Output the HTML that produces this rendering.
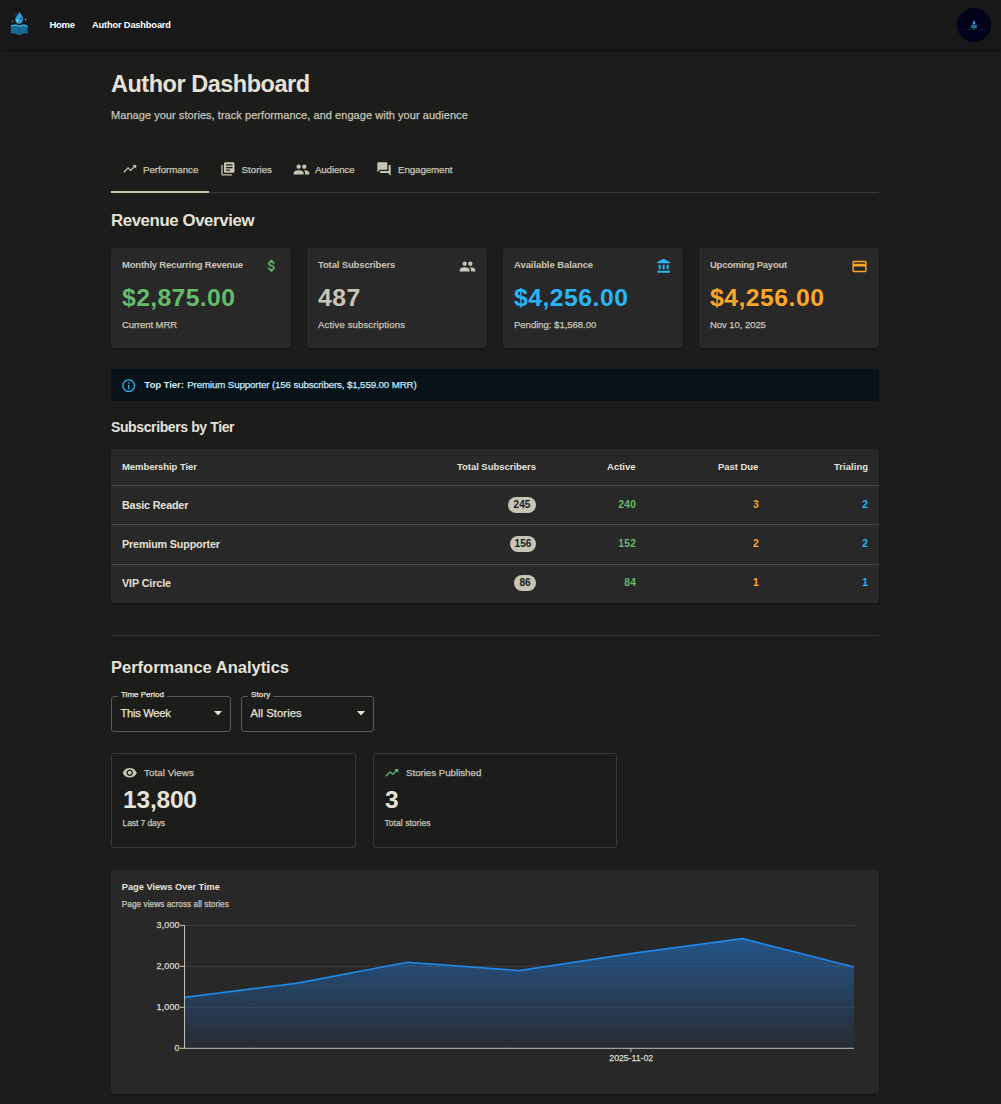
<!DOCTYPE html>
<html><head><meta charset="utf-8"><title>Author Dashboard</title>
<style>
html,body{margin:0;padding:0;}
body{width:1001px;height:1104px;overflow:hidden;position:relative;background:#1c1c1b;font-family:"Liberation Sans",sans-serif;}
.t{position:absolute;line-height:1;white-space:nowrap;}
b{font-weight:700;}
</style></head><body>
<div style="position:absolute;left:0px;top:0px;width:1001px;height:50px;background:#181818;box-shadow:0 1px 2px rgba(0,0,0,0.5);"></div>
<svg style="position:absolute;left:0;top:0" width="40" height="40" viewBox="0 0 40 40">
<path d="M10.8 25.6 Q15 23.6 19.2 25.6 Q23.4 23.6 27.6 25.6 L27.6 33.4 Q23.4 32.6 19.2 35.2 Q15 32.6 10.8 33.4 Z" fill="#1b6b92"/>
<path d="M19.2 25.6 L19.2 35.2" stroke="#155a7c" stroke-width="0.6"/>
<path d="M10.8 25.6 Q15 23.6 19.2 25.6 Q23.4 23.6 27.6 25.6 L27.6 26.8 Q23.4 25 19.2 27 Q15 25 10.8 26.8 Z" fill="#3aa7d9"/>
<path d="M19.4 12 C21.8 14.6 23 16.8 23 19.6 C23 22.2 21.3 23.8 19.2 23.8 C17 23.8 15.3 22.2 15.3 19.8 C15.3 17.2 17.6 15.6 19.4 12 Z" fill="#2f9fd4"/>
<path d="M20.6 17.2 C21.6 18.4 21.8 19.6 21 20.6 C20.8 19.4 20.2 18.6 19.6 18.2 Z" fill="#0f3a52"/>
<path d="M17.3 19.2 l0.35 0.9 0.9 0.35 -0.9 0.35 -0.35 0.9 -0.35 -0.9 -0.9 -0.35 0.9 -0.35z" fill="#d8f3ff"/>
<path d="M25.6 18.2 l0.4 1 1 0.4 -1 0.4 -0.4 1 -0.4 -1 -1 -0.4 1 -0.4z" fill="#4fc3f7"/>
<path d="M12.4 20.2 l0.3 0.8 0.8 0.3 -0.8 0.3 -0.3 0.8 -0.3 -0.8 -0.8 -0.3 0.8 -0.3z" fill="#4fc3f7"/>
<path d="M16 13.2 l0.3 0.7 0.7 0.3 -0.7 0.3 -0.3 0.7 -0.3 -0.7 -0.7 -0.3 0.7 -0.3z" fill="#3a9fcf"/>
</svg>
<div class="t" style="top:20.00px;font-size:9.5px;font-weight:700;color:#ffffff;letter-spacing:-0.297px;left:49.50px;">Home</div>
<div class="t" style="top:21.00px;font-size:9.25px;font-weight:700;color:#ffffff;letter-spacing:-0.148px;left:92.00px;">Author Dashboard</div>
<div style="position:absolute;left:957px;top:8px;width:34px;height:34px;border-radius:50%;background:#02021a;"></div>
<svg style="position:absolute;left:970px;top:20px" width="8" height="9" viewBox="0 0 19 26"><path d="M1 14.5 L9.5 12 L18 14.5 L18 23 L9.5 25 L1 23 Z" fill="#1c6a93"/><path d="M9.5 1.5 C11.5 4 13 6 13 8.5 C13 10.8 11.4 12.3 9.4 12.3 C7.3 12.3 5.8 10.8 5.8 8.7 C5.8 6.5 8 4.5 9.5 1.5 Z" fill="#3aa9dc"/></svg>
<div style="position:absolute;left:963px;top:29px;width:23px;height:1.2px;background:repeating-linear-gradient(90deg,#163d66 0 1.5px,transparent 1.5px 2.6px);opacity:0.8;"></div>
<div class="t" style="top:73.00px;font-size:23.5px;font-weight:700;color:#e6e2d8;letter-spacing:-0.485px;left:111.00px;">Author Dashboard</div>
<div class="t" style="top:110.00px;font-size:11.0px;font-weight:400;color:#c9c5b9;letter-spacing:0.049px;left:111.00px;-webkit-text-stroke:0.25px #c9c5b9;">Manage your stories, track performance, and engage with your audience</div>
<svg style="position:absolute;left:121.55px;top:161.30px" width="15.5" height="15.5" viewBox="0 0 24 24"><path fill="#c9c5b3"  d="M16 6l2.29 2.29-4.88 4.88-4-4L2 16.59 3.41 18l6-6 4 4 6.3-6.29L22 12V6z"/></svg>
<div class="t" style="top:165.00px;font-size:9.75px;font-weight:400;color:#c9c5b3;letter-spacing:-0.051px;left:143.00px;-webkit-text-stroke:0.25px #c9c5b3;">Performance</div>
<svg style="position:absolute;left:220.00px;top:161.00px" width="15.8" height="15.8" viewBox="0 0 24 24"><path fill="#c9c5b3"  d="M4 6H2v14c0 1.1.9 2 2 2h14v-2H4V6zm16-4H8c-1.1 0-2 .9-2 2v12c0 1.1.9 2 2 2h12c1.1 0 2-.9 2-2V4c0-1.1-.9-2-2-2zm-1 9H9V9h10v2zm-4 4H9v-2h6v2zm4-8H9V5h10v2z"/></svg>
<div class="t" style="top:165.00px;font-size:9.75px;font-weight:400;color:#c9c5b3;letter-spacing:0.043px;left:241.40px;-webkit-text-stroke:0.25px #c9c5b3;">Stories</div>
<svg style="position:absolute;left:292.60px;top:160.50px" width="17" height="17" viewBox="0 0 24 24"><path fill="#c9c5b3"  d="M16 11c1.66 0 2.99-1.34 2.99-3S17.66 5 16 5c-1.66 0-3 1.34-3 3s1.34 3 3 3zm-8 0c1.66 0 2.99-1.34 2.99-3S9.66 5 8 5C6.34 5 5 6.34 5 8s1.34 3 3 3zm0 2c-2.33 0-7 1.17-7 3.5V19h14v-2.5c0-2.33-4.67-3.5-7-3.5zm8 0c-.29 0-.62.02-.97.05 1.16.84 1.97 1.97 1.97 3.45V19h6v-2.5c0-2.33-4.67-3.5-7-3.5z"/></svg>
<div class="t" style="top:165.00px;font-size:9.75px;font-weight:400;color:#c9c5b3;letter-spacing:-0.151px;left:315.00px;-webkit-text-stroke:0.25px #c9c5b3;">Audience</div>
<svg style="position:absolute;left:375.90px;top:160.90px" width="16" height="16" viewBox="0 0 24 24"><path fill="#c9c5b3"  d="M21 6h-2v9H6v2c0 .55.45 1 1 1h11l4 4V7c0-.55-.45-1-1-1zm-4 6V3c0-.55-.45-1-1-1H3c-.55 0-1 .45-1 1v14l4-4h10c.55 0 1-.45 1-1z"/></svg>
<div class="t" style="top:165.00px;font-size:9.75px;font-weight:400;color:#c9c5b3;letter-spacing:-0.098px;left:398.00px;-webkit-text-stroke:0.25px #c9c5b3;">Engagement</div>
<div style="position:absolute;left:111px;top:192px;width:768px;height:1px;background:#3a3a3a;"></div>
<div style="position:absolute;left:111px;top:191px;width:98px;height:2px;background:#c9c5b3;"></div>
<div class="t" style="top:213.00px;font-size:16.75px;font-weight:700;color:#e6e2d8;letter-spacing:-0.370px;left:111.00px;">Revenue Overview</div>
<div style="position:absolute;left:111px;top:248px;width:180px;height:100px;background:#282828;border-radius:3px;box-shadow:0 1px 2px rgba(0,0,0,0.35);"></div>
<div class="t" style="top:260.00px;font-size:9.5px;font-weight:700;color:#c9c5b9;letter-spacing:-0.212px;left:122.00px;">Monthly Recurring Revenue</div>
<div class="t" style="top:286.00px;font-size:24.75px;font-weight:700;color:#66bb6a;letter-spacing:0.361px;left:122.00px;">$2,875.00</div>
<div class="t" style="top:320.00px;font-size:9.5px;font-weight:400;color:#c9c5b9;letter-spacing:-0.092px;left:122.00px;-webkit-text-stroke:0.25px #c9c5b9;">Current MRR</div>
<svg style="position:absolute;left:263.78px;top:258.15px" width="15.5" height="15.5" viewBox="0 0 24 24"><path fill="#66bb6a" stroke="#66bb6a" stroke-width="0.5" d="M11.8 10.9c-2.27-.59-3-1.2-3-2.15 0-1.09 1.01-1.85 2.7-1.85 1.78 0 2.44.85 2.5 2.1h2.21c-.07-1.72-1.12-3.3-3.21-3.81V3h-3v2.16c-1.94.42-3.5 1.68-3.5 3.61 0 2.31 1.91 3.46 4.7 4.13 2.5.6 3 1.48 3 2.41 0 .69-.49 1.79-2.7 1.79-2.06 0-2.87-.92-2.98-2.1h-2.2c.12 2.19 1.76 3.42 3.68 3.83V21h3v-2.15c1.95-.37 3.5-1.5 3.5-3.55 0-2.84-2.43-3.81-4.7-4.4z"/></svg>
<div style="position:absolute;left:307px;top:248px;width:180px;height:100px;background:#282828;border-radius:3px;box-shadow:0 1px 2px rgba(0,0,0,0.35);"></div>
<div class="t" style="top:260.00px;font-size:9.5px;font-weight:700;color:#c9c5b9;letter-spacing:-0.145px;left:318.00px;">Total Subscribers</div>
<div class="t" style="top:286.00px;font-size:24.75px;font-weight:700;color:#c9c5b9;letter-spacing:0.502px;left:318.00px;">487</div>
<div class="t" style="top:320.00px;font-size:9.5px;font-weight:400;color:#c9c5b9;letter-spacing:0.161px;left:318.00px;-webkit-text-stroke:0.25px #c9c5b9;">Active subscriptions</div>
<svg style="position:absolute;left:459.00px;top:257.50px" width="17" height="17" viewBox="0 0 24 24"><path fill="#c9c5b9"  d="M16 11c1.66 0 2.99-1.34 2.99-3S17.66 5 16 5c-1.66 0-3 1.34-3 3s1.34 3 3 3zm-8 0c1.66 0 2.99-1.34 2.99-3S9.66 5 8 5C6.34 5 5 6.34 5 8s1.34 3 3 3zm0 2c-2.33 0-7 1.17-7 3.5V19h14v-2.5c0-2.33-4.67-3.5-7-3.5zm8 0c-.29 0-.62.02-.97.05 1.16.84 1.97 1.97 1.97 3.45V19h6v-2.5c0-2.33-4.67-3.5-7-3.5z"/></svg>
<div style="position:absolute;left:503px;top:248px;width:180px;height:100px;background:#282828;border-radius:3px;box-shadow:0 1px 2px rgba(0,0,0,0.35);"></div>
<div class="t" style="top:260.00px;font-size:9.5px;font-weight:700;color:#c9c5b9;letter-spacing:-0.082px;left:514.00px;">Available Balance</div>
<div class="t" style="top:286.00px;font-size:24.75px;font-weight:700;color:#29b6f6;letter-spacing:0.474px;left:514.00px;">$4,256.00</div>
<div class="t" style="top:320.00px;font-size:9.5px;font-weight:400;color:#c9c5b9;letter-spacing:-0.005px;left:514.00px;-webkit-text-stroke:0.25px #c9c5b9;">Pending: $1,568.00</div>
<svg style="position:absolute;left:656.33px;top:257.93px" width="16" height="16" viewBox="0 0 24 24"><path fill="#29b6f6"  d="M4 10v7h3v-7H4zm6 0v7h3v-7h-3zM2 22h19v-3H2v3zm14-12v7h3v-7h-3zm-4.5-9L2 6v2h19V6l-9.5-5z"/></svg>
<div style="position:absolute;left:699px;top:248px;width:180px;height:100px;background:#282828;border-radius:3px;box-shadow:0 1px 2px rgba(0,0,0,0.35);"></div>
<div class="t" style="top:260.00px;font-size:9.5px;font-weight:700;color:#c9c5b9;letter-spacing:-0.258px;left:710.00px;">Upcoming Payout</div>
<div class="t" style="top:286.00px;font-size:24.75px;font-weight:700;color:#ffa726;letter-spacing:0.474px;left:710.00px;">$4,256.00</div>
<div class="t" style="top:320.00px;font-size:9.5px;font-weight:400;color:#c9c5b9;letter-spacing:-0.055px;left:710.00px;-webkit-text-stroke:0.25px #c9c5b9;">Nov 10, 2025</div>
<svg style="position:absolute;left:851.00px;top:257.50px" width="17" height="17" viewBox="0 0 24 24"><path fill="#ffa726"  d="M20 4H4c-1.11 0-1.99.89-1.99 2L2 18c0 1.11.89 2 2 2h16c1.11 0 2-.89 2-2V6c0-1.11-.89-2-2-2zm0 14H4v-6h16v6zm0-10H4V6h16v2z"/></svg>
<div style="position:absolute;left:111px;top:369px;width:768px;height:32px;background:#071219;border-radius:3px;"></div>
<svg style="position:absolute;left:120.60px;top:377.60px" width="15.4" height="15.4" viewBox="0 0 24 24"><path fill="#29b6f6"  d="M11 7h2v2h-2zm0 4h2v6h-2zm1-9C6.48 2 2 6.48 2 12s4.48 10 10 10 10-4.48 10-10S17.52 2 12 2zm0 18c-4.41 0-8-3.59-8-8s3.59-8 8-8 8 3.59 8 8-3.59 8-8 8z"/></svg>
<div class="t" style="top:380.00px;font-size:9.75px;font-weight:700;color:#cfeafa;letter-spacing:-0.137px;left:144.30px;">Top Tier:</div>
<div class="t" style="top:380.00px;font-size:9.75px;font-weight:400;color:#c2e6f8;letter-spacing:-0.138px;left:187.20px;-webkit-text-stroke:0.25px #c2e6f8;">Premium Supporter (156 subscribers, $1,559.00 MRR)</div>
<div class="t" style="top:420.00px;font-size:14.0px;font-weight:700;color:#e6e2d8;letter-spacing:-0.385px;left:111.00px;">Subscribers by Tier</div>
<div style="position:absolute;left:111px;top:449px;width:768px;height:154px;background:#282828;border-radius:3px;box-shadow:0 1px 2px rgba(0,0,0,0.35);"></div>
<div class="t" style="top:462.00px;font-size:9.5px;font-weight:700;color:#e6e2d8;letter-spacing:-0.059px;left:122.00px;">Membership Tier</div>
<div class="t" style="top:462.00px;font-size:9.5px;font-weight:700;color:#e6e2d8;letter-spacing:-0.026px;left:456.90px;">Total Subscribers</div>
<div class="t" style="top:462.00px;font-size:9.5px;font-weight:700;color:#e6e2d8;letter-spacing:0.020px;left:607.00px;">Active</div>
<div class="t" style="top:462.00px;font-size:9.5px;font-weight:700;color:#e6e2d8;letter-spacing:-0.034px;left:717.90px;">Past Due</div>
<div class="t" style="top:462.00px;font-size:9.5px;font-weight:700;color:#e6e2d8;letter-spacing:0.033px;left:834.00px;">Trialing</div>
<div style="position:absolute;left:111px;top:485px;width:768px;height:1px;background:#474747;"></div>
<div style="position:absolute;left:111px;top:524px;width:768px;height:1px;background:#474747;"></div>
<div style="position:absolute;left:111px;top:564px;width:768px;height:1px;background:#474747;"></div>
<div class="t" style="top:500.00px;font-size:10.75px;font-weight:700;color:#e6e2d8;letter-spacing:-0.160px;left:122.00px;">Basic Reader</div>
<div style="position:absolute;left:508px;top:497px;width:28px;height:16px;background:#c6c4b4;border-radius:8px;"></div>
<div class="t" style="top:500.00px;font-size:10px;font-weight:700;color:#1a1a1a;letter-spacing:0.056px;left:513.60px;">245</div>
<div class="t" style="top:500.00px;font-size:10.25px;font-weight:700;color:#66bb6a;letter-spacing:0.295px;left:618.30px;">240</div>
<div class="t" style="top:500.00px;font-size:10.25px;font-weight:700;color:#ffa726;letter-spacing:0.197px;left:752.90px;">3</div>
<div class="t" style="top:500.00px;font-size:10.25px;font-weight:700;color:#29b6f6;letter-spacing:0.197px;left:862.30px;">2</div>
<div class="t" style="top:539.00px;font-size:10.75px;font-weight:700;color:#e6e2d8;letter-spacing:-0.147px;left:122.00px;">Premium Supporter</div>
<div style="position:absolute;left:510px;top:536px;width:26px;height:16px;background:#c6c4b4;border-radius:8px;"></div>
<div class="t" style="top:539.00px;font-size:10px;font-weight:700;color:#1a1a1a;letter-spacing:0.056px;left:514.60px;">156</div>
<div class="t" style="top:539.00px;font-size:10.25px;font-weight:700;color:#66bb6a;letter-spacing:0.295px;left:618.30px;">152</div>
<div class="t" style="top:539.00px;font-size:10.25px;font-weight:700;color:#ffa726;letter-spacing:0.197px;left:752.90px;">2</div>
<div class="t" style="top:539.00px;font-size:10.25px;font-weight:700;color:#29b6f6;letter-spacing:0.197px;left:862.30px;">2</div>
<div class="t" style="top:578.00px;font-size:10.75px;font-weight:700;color:#e6e2d8;letter-spacing:-0.113px;left:122.00px;">VIP Circle</div>
<div style="position:absolute;left:514px;top:575px;width:22px;height:16px;background:#c6c4b4;border-radius:8px;"></div>
<div class="t" style="top:578.00px;font-size:10px;font-weight:700;color:#1a1a1a;letter-spacing:0.075px;left:519.40px;">86</div>
<div class="t" style="top:578.00px;font-size:10.25px;font-weight:700;color:#66bb6a;letter-spacing:0.394px;left:624.20px;">84</div>
<div class="t" style="top:578.00px;font-size:10.25px;font-weight:700;color:#ffa726;letter-spacing:0.197px;left:752.90px;">1</div>
<div class="t" style="top:578.00px;font-size:10.25px;font-weight:700;color:#29b6f6;letter-spacing:0.197px;left:862.30px;">1</div>
<div style="position:absolute;left:111px;top:635px;width:768px;height:1px;background:#363636;"></div>
<div class="t" style="top:659.00px;font-size:16.5px;font-weight:700;color:#e6e2d8;letter-spacing:-0.009px;left:111.00px;">Performance Analytics</div>
<div style="position:absolute;left:111px;top:695.5px;width:120px;height:36px;border:1px solid #5a5a5a;border-radius:3px;box-sizing:border-box;"></div>
<div style="position:absolute;left:118px;top:694px;width:49px;height:3px;background:#1c1c1b;"></div>
<div class="t" style="top:691.00px;font-size:8px;font-weight:400;color:#e6e2d8;letter-spacing:0.013px;left:121.00px;-webkit-text-stroke:0.25px #e6e2d8;">Time Period</div>
<div class="t" style="top:708.00px;font-size:11.25px;font-weight:400;color:#e6e2d8;letter-spacing:-0.328px;left:120.50px;-webkit-text-stroke:0.25px #e6e2d8;">This Week</div>
<svg style="position:absolute;left:214px;top:711px" width="8" height="5" viewBox="0 0 8 5"><path d="M0 0h8L4 4.5z" fill="#e6e2d8"/></svg>
<div style="position:absolute;left:241px;top:695.5px;width:133px;height:36px;border:1px solid #5a5a5a;border-radius:3px;box-sizing:border-box;"></div>
<div style="position:absolute;left:248px;top:694px;width:25.3px;height:3px;background:#1c1c1b;"></div>
<div class="t" style="top:691.00px;font-size:8px;font-weight:400;color:#e6e2d8;letter-spacing:0.153px;left:251.00px;-webkit-text-stroke:0.25px #e6e2d8;">Story</div>
<div class="t" style="top:708.00px;font-size:11.25px;font-weight:400;color:#e6e2d8;letter-spacing:0.048px;left:250.50px;-webkit-text-stroke:0.25px #e6e2d8;">All Stories</div>
<svg style="position:absolute;left:357px;top:711px" width="8" height="5" viewBox="0 0 8 5"><path d="M0 0h8L4 4.5z" fill="#e6e2d8"/></svg>
<div style="position:absolute;left:111px;top:753px;width:245px;height:95px;border:1px solid #3a3a3a;border-radius:3px;box-sizing:border-box;"></div>
<svg style="position:absolute;left:122.25px;top:765.25px" width="15.5" height="15.5" viewBox="0 0 24 24"><path fill="#c9c5b3"  d="M12 4.5C7 4.5 2.73 7.61 1 12c1.73 4.39 6 7.5 11 7.5s9.27-3.11 11-7.5c-1.73-4.39-6-7.5-11-7.5zM12 17c-2.76 0-5-2.24-5-5s2.24-5 5-5 5 2.24 5 5-2.24 5-5 5zm0-8c-1.66 0-3 1.34-3 3s1.34 3 3 3 3-1.34 3-3-1.34-3-3-3z"/></svg>
<div class="t" style="top:768.00px;font-size:9.75px;font-weight:400;color:#c9c5b9;letter-spacing:0.066px;left:144.00px;-webkit-text-stroke:0.25px #c9c5b9;">Total Views</div>
<div class="t" style="top:788.00px;font-size:24.5px;font-weight:700;color:#e6e2d8;letter-spacing:-0.188px;left:123.00px;">13,800</div>
<div class="t" style="top:819.00px;font-size:8.5px;font-weight:400;color:#c9c5b9;letter-spacing:-0.090px;left:122.50px;-webkit-text-stroke:0.25px #c9c5b9;">Last 7 days</div>
<div style="position:absolute;left:373px;top:753px;width:244px;height:95px;border:1px solid #3a3a3a;border-radius:3px;box-sizing:border-box;"></div>
<svg style="position:absolute;left:383.60px;top:765.45px" width="15.5" height="15.5" viewBox="0 0 24 24"><path fill="#66bb6a"  d="M16 6l2.29 2.29-4.88 4.88-4-4L2 16.59 3.41 18l6-6 4 4 6.3-6.29L22 12V6z"/></svg>
<div class="t" style="top:768.00px;font-size:9.75px;font-weight:400;color:#c9c5b9;letter-spacing:-0.036px;left:406.00px;-webkit-text-stroke:0.25px #c9c5b9;">Stories Published</div>
<div class="t" style="top:788.00px;font-size:24.5px;font-weight:700;color:#e6e2d8;letter-spacing:-0.125px;left:385.00px;">3</div>
<div class="t" style="top:819.00px;font-size:8.5px;font-weight:400;color:#c9c5b9;letter-spacing:0.052px;left:384.50px;-webkit-text-stroke:0.25px #c9c5b9;">Total stories</div>
<div style="position:absolute;left:111px;top:870px;width:768px;height:224px;background:#282828;border-radius:3px;box-shadow:0 1px 2px rgba(0,0,0,0.35);"></div>
<div class="t" style="top:883.00px;font-size:9.25px;font-weight:700;color:#e6e2d8;letter-spacing:-0.016px;left:121.80px;">Page Views Over Time</div>
<div class="t" style="top:901.00px;font-size:8.25px;font-weight:400;color:#c9c5b9;letter-spacing:0.040px;left:121.80px;-webkit-text-stroke:0.25px #c9c5b9;">Page views across all stories</div>
<svg style="position:absolute;left:0;top:0" width="1001" height="1104">
<defs><linearGradient id="ga" gradientUnits="userSpaceOnUse" x1="0" y1="938" x2="0" y2="1048"><stop offset="0" stop-color="#2173c9" stop-opacity="0.6"/><stop offset="1" stop-color="#1e6fd0" stop-opacity="0.05"/></linearGradient></defs>
<line x1="184.5" x2="854" y1="1007.33" y2="1007.33" stroke="#3d3d3d" stroke-width="1"/>
<line x1="184.5" x2="854" y1="966.37" y2="966.37" stroke="#3d3d3d" stroke-width="1"/>
<line x1="184.5" x2="854" y1="925.40" y2="925.40" stroke="#3d3d3d" stroke-width="1"/>
<path d="M184.50,1048.30 L184.50,997.40 L296.08,983.40 L407.67,962.20 L519.25,970.60 L630.83,953.60 L742.42,938.60 L854.00,967.00 L854.00,1048.30 Z" fill="url(#ga)"/>
<polyline points="184.50,997.40 296.08,983.40 407.67,962.20 519.25,970.60 630.83,953.60 742.42,938.60 854.00,967.00" fill="none" stroke="#1e88e5" stroke-width="1.6" stroke-linejoin="round"/>
<line x1="184.5" x2="184.5" y1="925" y2="1048.3" stroke="#c2c0ba" stroke-width="1"/>
<line x1="184.5" x2="854" y1="1048.3" y2="1048.3" stroke="#c2c0ba" stroke-width="1"/>
<line x1="180" x2="184.5" y1="1048.30" y2="1048.30" stroke="#c2c0ba" stroke-width="1"/>
<line x1="180" x2="184.5" y1="1007.33" y2="1007.33" stroke="#c2c0ba" stroke-width="1"/>
<line x1="180" x2="184.5" y1="966.37" y2="966.37" stroke="#c2c0ba" stroke-width="1"/>
<line x1="180" x2="184.5" y1="925.40" y2="925.40" stroke="#c2c0ba" stroke-width="1"/>
<line x1="630.83" x2="630.83" y1="1048.3" y2="1052.3" stroke="#c2c0ba" stroke-width="1"/>
</svg>
<div class="t" style="top:1044.00px;font-size:8.75px;font-weight:400;color:#dcd8cc;letter-spacing:0.141px;left:174.60px;-webkit-text-stroke:0.25px #dcd8cc;">0</div>
<div class="t" style="top:1003.00px;font-size:9.0px;font-weight:400;color:#dcd8cc;letter-spacing:0.125px;left:156.60px;-webkit-text-stroke:0.25px #dcd8cc;">1,000</div>
<div class="t" style="top:962.00px;font-size:9.0px;font-weight:400;color:#dcd8cc;letter-spacing:0.125px;left:156.60px;-webkit-text-stroke:0.25px #dcd8cc;">2,000</div>
<div class="t" style="top:921.00px;font-size:9.0px;font-weight:400;color:#dcd8cc;letter-spacing:0.125px;left:156.60px;-webkit-text-stroke:0.25px #dcd8cc;">3,000</div>
<div class="t" style="top:1054.00px;font-size:8.75px;font-weight:400;color:#dcd8cc;letter-spacing:-0.037px;left:609.30px;-webkit-text-stroke:0.25px #dcd8cc;">2025-11-02</div>
</body></html>
